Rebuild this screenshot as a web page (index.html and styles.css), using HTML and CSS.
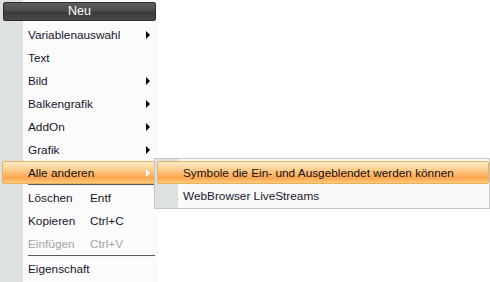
FILE: index.html
```html
<!DOCTYPE html>
<html lang="de">
<head>
    <meta charset="UTF-8">
    <title>Kontextmenü</title>
    <link rel="stylesheet" href="styles.css">
</head>
<body>
<div class="menu">
    <div class="menu-title">Neu</div>
    <div class="item sub">Variablenauswahl</div>
    <div class="item">Text</div>
    <div class="item sub">Bild</div>
    <div class="item sub">Balkengrafik</div>
    <div class="item sub">AddOn</div>
    <div class="item sub">Grafik</div>
    <div class="item sub active">Alle anderen</div>
    <div class="sep"></div>
    <div class="item"><span class="label">Löschen</span><span class="key">Entf</span></div>
    <div class="item"><span class="label">Kopieren</span><span class="key">Ctrl+C</span></div>
    <div class="item disabled"><span class="label">Einfügen</span><span class="key">Ctrl+V</span></div>
    <div class="sep"></div>
    <div class="item">Eigenschaft</div>

    <div class="submenu">
        <div class="item active">Symbole die Ein- und Ausgeblendet werden können</div>
        <div class="item">WebBrowser LiveStreams</div>
    </div>
</div>
</body>
</html>
```

FILE: styles.css
```css
*
{
    margin: 0;
    padding: 0;
    box-sizing: border-box;
}
body
{
    background: #ffffff;
    font-family: "Liberation Sans", Arial, sans-serif;
    font-size: 11.8px;
    color: #16162c;
    width: 490px;
    height: 282px;
    overflow: hidden;
}
.menu
{
    position: relative;
    width: 158px;
    height: 282px;
    padding-top: 2px;
    background: linear-gradient(to right, #dce1e1 23px, #fbfbfb 23px);
}
.menu-title
{
    margin: 0 2px 2px 3px;
    height: 19px;
    line-height: 17px;
    border-radius: 2px;
    border: 1px solid #2e2e2e;
    background: linear-gradient(#5e5e5e, #4c4c4c 45%, #3c3c3c 55%, #474747);
    color: #ffffff;
    text-align: center;
    font-size: 12.5px;
}
.item
{
    position: relative;
    display: flex;
    align-items: center;
    height: 23px;
    padding-left: 28px;
    white-space: nowrap;
}
.item .label
{
    width: 62px;
}
.sub::after
{
    content: "";
    position: absolute;
    left: 146px;
    top: 8px;
    border-left: 4px solid #000000;
    border-top: 4px solid transparent;
    border-bottom: 4px solid transparent;
}
.active
{
    margin-left: 2px;
    padding-left: 25px;
    width: 154px;
    border: 1px solid #e6b35c;
    border-radius: 2px;
    background: linear-gradient(#ffeac6, #ffd092 35%, #ffa54e 75%, #ffca7c);
    color: #101010;
}
.menu .active.sub::after
{
    left: 143px;
    top: 7px;
    border-left-color: #ffffff;
}
.sep
{
    margin-left: 28px;
    width: 127px;
    height: 2px;
    border-top: 1px solid #5a5a5a;
    border-bottom: 1px solid #f4f4f4;
}
.disabled
{
    color: #a4a4a4;
}
.submenu
{
    position: absolute;
    left: 154px;
    top: 158px;
    width: 336px;
    padding: 2px 1px 1px 1px;
    border: 1px solid #c4c4c4;
    background: linear-gradient(to right, #dce1e1 23px, #fafafa 23px);
}
.submenu .item
{
    padding-left: 27px;
}
.submenu .active
{
    margin-left: 1px;
    padding-left: 25px;
    width: 332px;
}
```
